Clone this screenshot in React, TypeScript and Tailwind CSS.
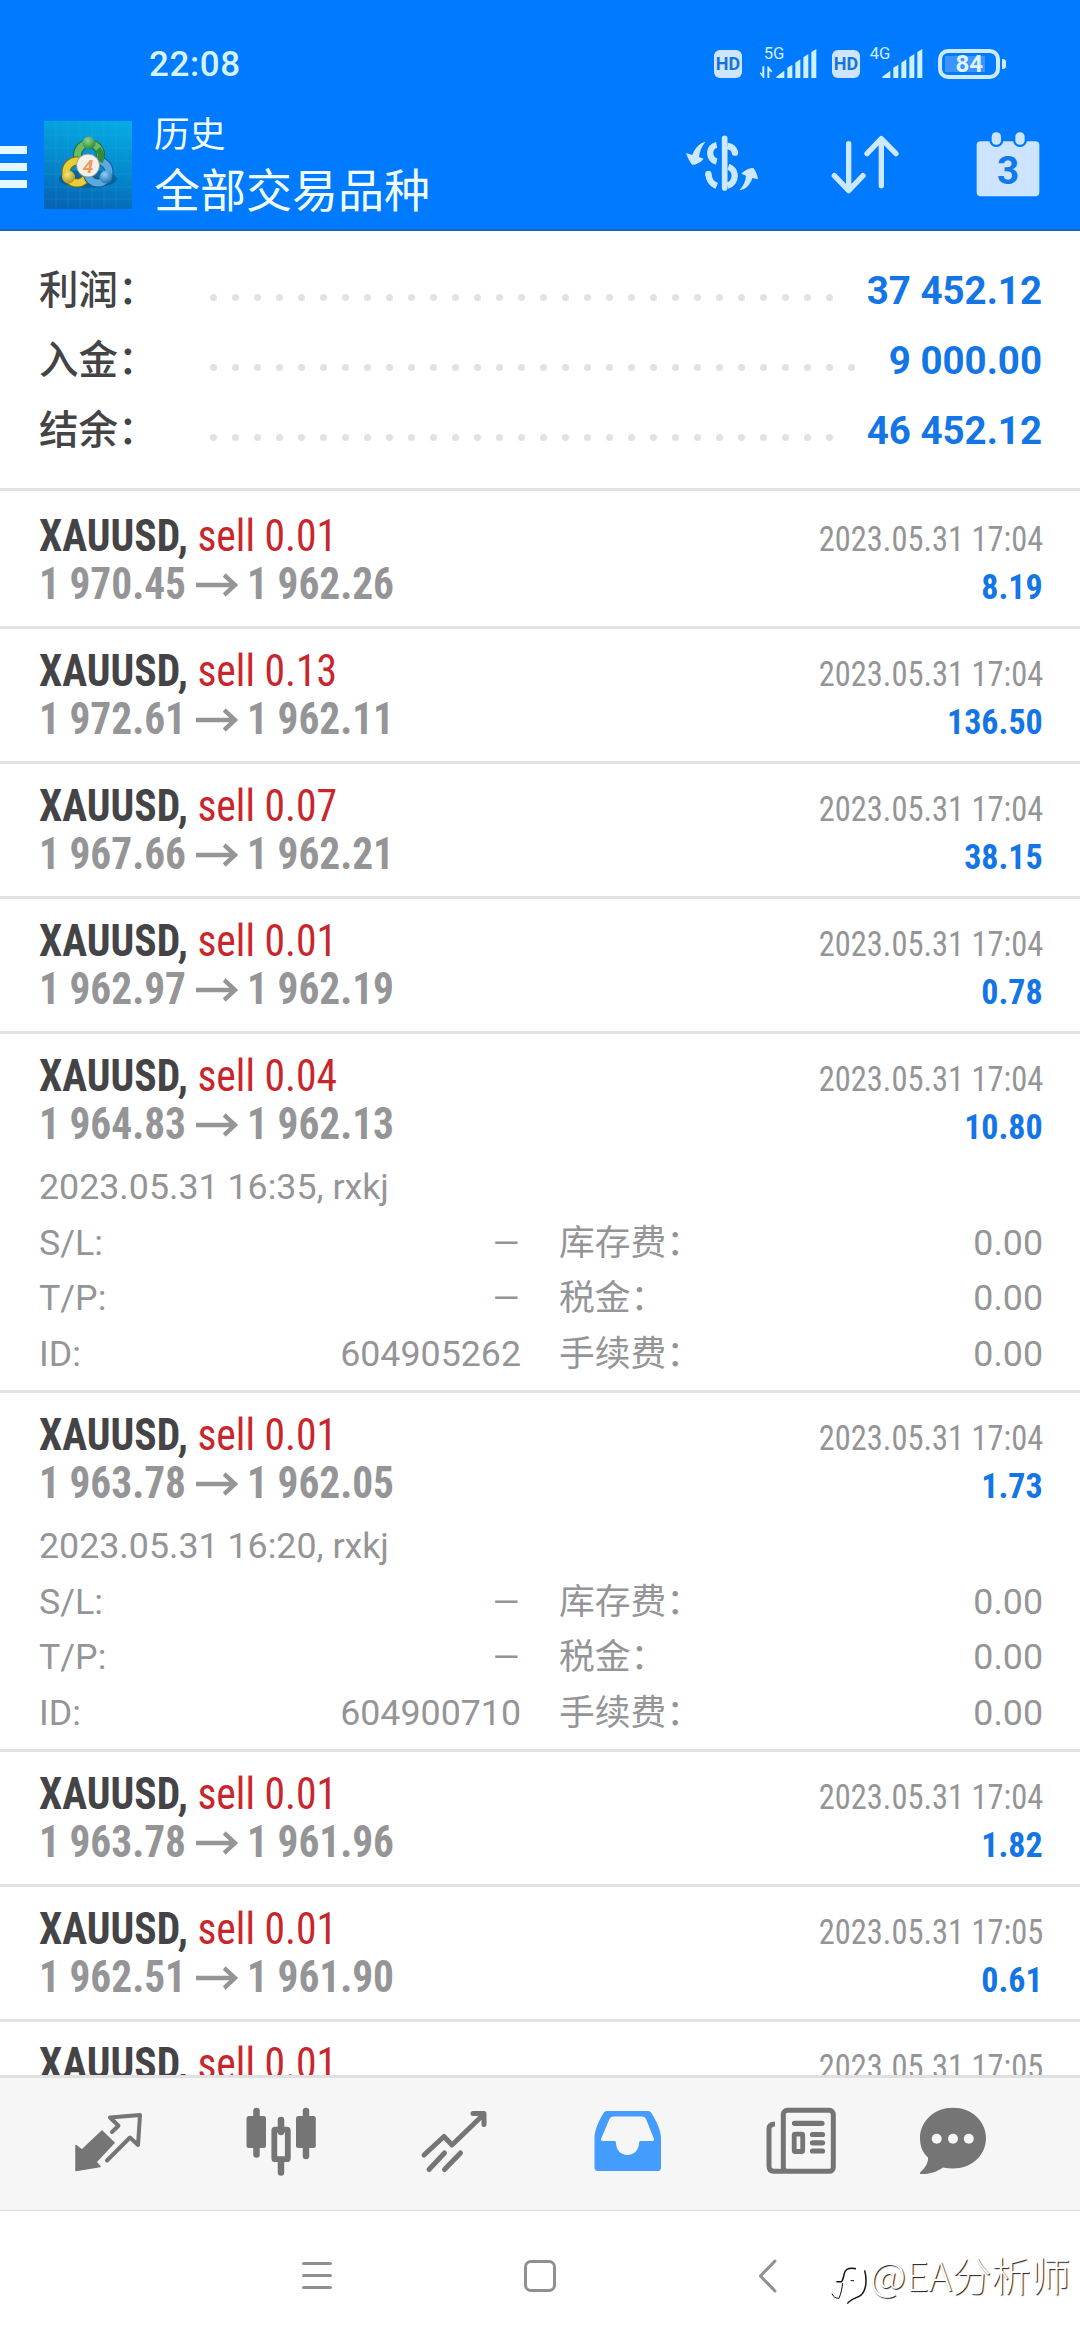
import type { ReactNode } from 'react';

type Trade = {
  volume: string;
  open: string;
  close: string;
  time: string;
  profit: string;
  details?: { opened: string; id: string };
};

const summary = [
  { label: '利润：', value: '37 452.12', dots: 29 },
  { label: '入金：', value: '9 000.00', dots: 30 },
  { label: '结余：', value: '46 452.12', dots: 29 },
];

const trades: Trade[] = [
  { volume: '0.01', open: '1 970.45', close: '1 962.26', time: '2023.05.31 17:04', profit: '8.19' },
  { volume: '0.13', open: '1 972.61', close: '1 962.11', time: '2023.05.31 17:04', profit: '136.50' },
  { volume: '0.07', open: '1 967.66', close: '1 962.21', time: '2023.05.31 17:04', profit: '38.15' },
  { volume: '0.01', open: '1 962.97', close: '1 962.19', time: '2023.05.31 17:04', profit: '0.78' },
  {
    volume: '0.04', open: '1 964.83', close: '1 962.13', time: '2023.05.31 17:04', profit: '10.80',
    details: { opened: '2023.05.31 16:35, rxkj', id: '604905262' },
  },
  {
    volume: '0.01', open: '1 963.78', close: '1 962.05', time: '2023.05.31 17:04', profit: '1.73',
    details: { opened: '2023.05.31 16:20, rxkj', id: '604900710' },
  },
  { volume: '0.01', open: '1 963.78', close: '1 961.96', time: '2023.05.31 17:04', profit: '1.82' },
  { volume: '0.01', open: '1 962.51', close: '1 961.90', time: '2023.05.31 17:05', profit: '0.61' },
];

function HdBadge() {
  return (
    <div className="mt-[50px] flex h-7 w-7 items-center justify-center rounded-[6px] bg-[#cfe5ff] [font-family:Roboto] text-[18px] leading-7 font-bold text-[#1674d8]">
      HD
    </div>
  );
}

function Signal({ label, data }: { label: string; data?: boolean }) {
  return (
    <svg className="mt-[46px] h-[34px] w-[58px] overflow-visible" viewBox="236 18 174 102" fill="#cdf0ff">
      <text x="250" y="57" fontSize="50" fontFamily="Roboto" fontWeight="400">{label}</text>
      {data && (
        <path d="M246 79h6v35h-3L238 100l3-3 5 4zM261 114h6V92l6 5 3-3-12-15h-3z" />
      )}
      <path d="M288 114v-4l24-18v22zM321 114V83l15-9v40zM345 114V68l15-10v56zM369 114V52l15-10v72zM393 114V36l15-9v87z" />
    </svg>
  );
}

function Battery() {
  return (
    <div className="mt-[49px] flex items-center">
      <div className="flex h-[30px] w-[62px] items-center rounded-[10px] border-4 border-[#cdeaff] px-[3px]">
        <div className="flex h-4 w-10 items-center justify-end bg-[#3c95ff]">
          <span className="mr-[2px] [font-family:Roboto] text-[24px] leading-4 font-bold text-[#dff4ff]">84</span>
        </div>
      </div>
      <div className="ml-[2px] h-[10px] w-1 rounded-r-[3px] bg-[#cdeaff]" />
    </div>
  );
}

function AppLogo() {
  return (
    <svg className="h-[88px] w-[88px]" viewBox="0 0 88 88">
      <defs>
        <linearGradient id="bg" x1="0.6" y1="0" x2="0.4" y2="1">
          <stop offset="0" stopColor="#06a9e2" />
          <stop offset="0.55" stopColor="#0587cb" />
          <stop offset="1" stopColor="#0664b4" />
        </linearGradient>
        <radialGradient id="green" cx="0.4" cy="0.3" r="0.8">
          <stop offset="0" stopColor="#8fd68c" /><stop offset="1" stopColor="#1f7a37" />
        </radialGradient>
        <radialGradient id="gold" cx="0.4" cy="0.3" r="0.8">
          <stop offset="0" stopColor="#f9ea7b" /><stop offset="1" stopColor="#a88a12" />
        </radialGradient>
        <radialGradient id="sky" cx="0.4" cy="0.3" r="0.8">
          <stop offset="0" stopColor="#8fd0f5" /><stop offset="1" stopColor="#1565a8" />
        </radialGradient>
      </defs>
      <rect width="88" height="88" fill="url(#bg)" />
      <path d="M12 0v88M24 0v88M36 0v88M48 0v88M60 0v88M72 0v88M0 14h88M0 27h88M0 40h88M0 53h88M0 66h88M0 78h88" stroke="#3fbdf0" strokeOpacity="0.16" strokeWidth="1" />
      <ellipse cx="44" cy="58" rx="29" ry="9" fill="#04304f" opacity="0.35" />
      <g fill="none">
        <circle cx="45" cy="34" r="11.500" stroke="#1d6b33" strokeWidth="9" />
        <circle cx="45" cy="34" r="11.500" stroke="#6cbb63" strokeWidth="7" />
        <circle cx="33" cy="51" r="11" stroke="#7d6b10" strokeWidth="9" />
        <circle cx="33" cy="51" r="11" stroke="#e6cf3a" strokeWidth="7" />
        <circle cx="54" cy="51" r="11" stroke="#155a94" strokeWidth="9" />
        <circle cx="54" cy="51" r="11" stroke="#5aa9e0" strokeWidth="7" />
        <path d="M54 28a12 12 0 0 1 2 13" stroke="#2f8b3e" strokeWidth="6" />
      </g>
      <circle cx="45" cy="22" r="6.500" fill="url(#green)" />
      <circle cx="24.500" cy="56" r="6.500" fill="url(#gold)" />
      <circle cx="62" cy="56" r="6.500" fill="url(#sky)" />
      <circle cx="44" cy="44.500" r="11.500" fill="#f3efe9" stroke="#8a8a78" strokeWidth="0.800" />
      <text x="44" y="51.500" textAnchor="middle" fontFamily="Roboto" fontWeight="700" fontSize="19" fontStyle="italic" fill="#ee9a58">4</text>
    </svg>
  );
}

function CurrencyIcon() {
  return (
    <svg className="mt-[134px] h-[58px] w-[76px]" viewBox="12 282 228 174" fill="none" stroke="#cde9ff" strokeWidth="19">
      <path d="M134 295V444" strokeWidth="17" strokeLinecap="round" />
      <path d="M110 315C84 320 84 358 110 365M145 380C170 388 172 428 142 437" />
      <path d="M142 318C155 320 163 328 165 338M85 402C87 424 96 432 110 438" strokeLinecap="butt" />
      <circle cx="165" cy="338" r="9.500" fill="#cde9ff" stroke="none" />
      <circle cx="85" cy="402" r="9.500" fill="#cde9ff" stroke="none" />
      <path d="M76 306C60 309 46 322 37 345L18 339C22 352 30 366 36 374C50 375 64 365 71 356L57 351C59 334 66 318 76 306ZM178 451C190 438 197 424 198 407L184 401C194 390 208 384 220 384C228 394 232 404 234 418L217 414C212 432 198 449 178 451Z" fill="#cde9ff" stroke="none" />
    </svg>
  );
}

function SortIcon() {
  return (
    <svg className="mt-[134px] h-[61px] w-[68px]" viewBox="453 282 204 183" fill="none" stroke="#cde9ff" strokeWidth="16" strokeLinecap="round" strokeLinejoin="round">
      <path d="M506 311V450M463 407L506 452L549 407M604 437V297M561 341L604 296L648 341" />
    </svg>
  );
}

function CalendarIcon() {
  return (
    <svg className="mt-[131px] h-[66px] w-[64px]" viewBox="1008 393 192 198">
      <rect x="1010" y="424" width="188" height="165" rx="12" fill="#cde4ff" />
      <rect x="1055" y="397" width="28" height="37" rx="13" fill="#cde4ff" stroke="#007aff" strokeWidth="14" paintOrder="stroke" />
      <rect x="1126" y="397" width="28" height="37" rx="13" fill="#cde4ff" stroke="#007aff" strokeWidth="14" paintOrder="stroke" />
      <text x="1104" y="553" textAnchor="middle" fontFamily="Roboto" fontWeight="700" fontSize="116" fill="#1279ea">3</text>
    </svg>
  );
}

function Header() {
  return (
    <header className="flex h-[231px] shrink-0 flex-col border-b-2 border-[#1468b8] bg-[#007aff]">
      <div className="flex h-0 items-start">
        <span className="mt-[45px] ml-[149px] w-[100px] [font-family:Roboto] text-[35px] leading-10 font-medium tracking-[0.6px] text-[#d4f3ff]">22:08</span>
        <div className="ml-[465px]"><HdBadge /></div>
        <div className="ml-[17px]"><Signal label="5G" data /></div>
        <div className="ml-[15px]"><HdBadge /></div>
        <div className="ml-[5px]"><Signal label="4G" /></div>
        <div className="ml-[15px]"><Battery /></div>
      </div>
      <div className="flex items-start">
        <div className="mt-[146px] flex w-[27px] flex-col gap-[9px]">
          <div className="h-2 bg-[#e4f8ff]" />
          <div className="h-2 bg-[#e4f8ff]" />
          <div className="h-2 bg-[#e4f8ff]" />
        </div>
        <div className="mt-[121px] ml-[17px]"><AppLogo /></div>
        <div className="mt-[113px] ml-[22px] w-[530px] text-[#f0fdff]">
          <div className="text-[35.75px] leading-[44px]">历史</div>
          <div className="text-[46px] leading-[68px]">全部交易品种</div>
        </div>
        <CurrencyIcon />
        <div className="ml-[71px]"><SortIcon /></div>
        <div className="ml-[77px]"><CalendarIcon /></div>
      </div>
    </header>
  );
}

function Summary() {
  return (
    <section className="shrink-0 border-b-[3px] border-[#e3e3e3] pt-[25px] pr-[38px] pb-[22px] pl-[39px] text-[38.5px] leading-[70px]">
      {summary.map((s) => (
        <div key={s.label} className="flex h-[70px] items-center">
          <span className="w-[171px] text-[39.5px] font-medium text-[#444446]">{s.label}</span>
          <span className="mt-3 flex flex-1 gap-[15px]">
            {Array.from({ length: s.dots }, (_, i) => (
              <i key={i} className="h-[7px] w-[7px] shrink-0 rounded-full bg-[#e2e2e2]" />
            ))}
          </span>
          <span className="font-bold text-[#1475e6]">{s.value}</span>
        </div>
      ))}
    </section>
  );
}

function Dash() {
  return <span className="inline-block origin-right scale-x-[1.28]">–</span>;
}

function DetailRow({ a, av, b, tight }: { a: string; av: ReactNode; b: string; tight?: boolean }) {
  return (
    <div className={tight ? 'flex h-[55px]' : 'flex h-14'}>
      <span className="w-[240px]">{a}</span>
      <span className="w-[242px] text-right">{av}</span>
      <span className="ml-[38px] w-[240px]">{b}</span>
      <span className="flex-1 text-right">0.00</span>
    </div>
  );
}

function TradeHeading({ volume }: { volume: string }) {
  return (
    <div className="h-12 origin-left scale-x-[0.945] whitespace-pre">
      <span className="font-bold text-[#444446]">XAUUSD,</span>
      <span className="text-[#c8262c]"> sell {volume}</span>
    </div>
  );
}

function TradeTime({ time }: { time: string }) {
  return <div className="h-12 origin-right scale-x-[0.908] leading-[54px]">{time}</div>;
}

function TradeRow({ trade, first }: { trade: Trade; first?: boolean }) {
  const { details } = trade;
  return (
    <article className={`shrink-0 border-b-[3px] border-[#e3e3e3] pr-[37px] pl-[39px] text-[#959597] ${first ? 'pt-[21px]' : 'pt-[18px]'} ${details ? 'pb-2' : 'pb-[18px]'}`}>
      <div className="flex justify-between [font-family:'Roboto_Condensed',Roboto,sans-serif]">
        <div className="text-[44px] leading-[48px]">
          <TradeHeading volume={trade.volume} />
          <div className="flex h-12 origin-left scale-x-[0.94] items-center font-bold">
            {trade.open}
            <svg className="mt-[2px] mr-[9px] ml-[10px] h-6 w-[46px]" viewBox="0 0 46 24" fill="none" stroke="#959597" strokeWidth="4.500">
              <path d="M1 12H42M31 2L42.500 12L31 22" />
            </svg>
            {trade.close}
          </div>
        </div>
        <div className="flex flex-col items-end text-[35.75px]">
          <TradeTime time={trade.time} />
          <div className="h-12 origin-right scale-x-[0.95] leading-[54px] font-bold text-[#1475e6]">{trade.profit}</div>
        </div>
      </div>
      {details && (
        <div className="pt-[11px] text-[35.75px] leading-[56px]">
          <div className="h-14">{details.opened}</div>
          <DetailRow a="S/L:" av={<Dash />} b="库存费：" tight />
          <DetailRow a="T/P:" av={<Dash />} b="税金：" />
          <DetailRow a="ID:" av={details.id} b="手续费：" />
        </div>
      )}
    </article>
  );
}

function TabIcon({ children, box, className }: { children: ReactNode; box: string; className: string }) {
  return (
    <svg className={`h-[74px] shrink-0 ${className}`} viewBox={box} fill="none" strokeLinecap="round" strokeLinejoin="round">
      {children}
    </svg>
  );
}

function TabBar() {
  return (
    <nav className="flex h-[136px] shrink-0 items-start border-t-[3px] border-b border-t-[#e0e0e1] border-b-[#dcdcdc] bg-[#f6f6f6] pt-[26px]">
      <TabIcon box="72 104 72 74" className="ml-[72px] w-[72px]">
        <path d="M76 170.500V145.500L82 150L102 131L114 142.700L96 162L100 166.500Z" fill="#757575" stroke="#757575" strokeWidth="1.500" />
        <path d="M107 160.500L130 137.500L138 145L140 115L110 117.500L118.500 125.700L112 132" stroke="#757575" strokeWidth="4" />
      </TabIcon>
      <TabIcon box="243 104 76 74" className="ml-[99px] w-[76px]">
        <path d="M256.500 111V154.500M306 111V156M281 120V132M281 160V172.500" stroke="#757575" strokeWidth="6.500" />
        <rect x="246.500" y="116" width="19.500" height="32" rx="2.500" fill="#757575" />
        <rect x="296" y="116" width="19.800" height="32" rx="2.500" fill="#757575" />
        <rect x="274.300" y="129.700" width="13.500" height="29.500" rx="1" stroke="#757575" strokeWidth="5.800" />
      </TabIcon>
      <TabIcon box="418 104 72 74" className="ml-[99px] w-[72px]">
        <path d="M424 155L444 136.500L452 145L483 115M473 113.500H484V124.500M444.500 153L429 169.500M460.500 153L444.500 169.500" stroke="#757575" strokeWidth="5" />
      </TabIcon>
      <TabIcon box="591 104 73 74" className="ml-[101px] w-[73px]">
        <path fillRule="evenodd" d="M607 111H648C650 111 651 112 652 114C657 122 661 131 661 138V167.500Q661 171 657.500 171H598Q594.500 171 594.500 167.500V138C594.500 131 598 122 603 114C604 112 605 111 607 111ZM613 116.500Q610.500 116.500 609.500 119L601 139Q600.500 141 602.500 141H614.500Q616 141 616 143C616 150 621 155 627.500 155S639 150 639 143Q639 141 640.500 141H652.500Q654.500 141 654 139L646 119Q645 116.500 642.500 116.500Z" fill="#449cff" />
      </TabIcon>
      <TabIcon box="763 104 75 74" className="ml-[99px] w-[75px]">
        <rect x="783.300" y="110.300" width="50" height="61" rx="4" stroke="#757575" strokeWidth="5" />
        <path d="M775 124C771 124 769 126 769 129V166Q769 171.300 774 171.300H785" stroke="#757575" strokeWidth="5" strokeLinecap="butt" />
        <path d="M794.500 123.300H822M812.500 134.500H822.500M812.500 142.800H822.500M812.500 151H822.500" stroke="#757575" strokeWidth="5.200" />
        <rect x="794.200" y="134.200" width="8.500" height="17.300" rx="1" stroke="#757575" strokeWidth="4.800" />
      </TabIcon>
      <TabIcon box="917 104 72 74" className="ml-[79px] w-[72px]">
        <path d="M953 107.700C971.500 107.700 986 121 986 138C986 155.500 971.500 168.500 953 168.500Q948 168.500 943 167.500C938 171.500 929 174.500 920.500 174Q919 173.500 920.500 172C925 168 928.500 163 928 157.500C922.500 152.500 920 146 920 138C920 121 934.500 107.700 953 107.700Z" fill="#757575" />
        <g fill="#f6f6f6">
          <circle cx="936.700" cy="138.700" r="5" />
          <circle cx="953" cy="138.700" r="5" />
          <circle cx="968.800" cy="138.700" r="5" />
        </g>
      </TabIcon>
    </nav>
  );
}

function SystemNav() {
  return (
    <footer className="flex h-[129px] shrink-0 items-center bg-white">
      <div className="ml-[302px] flex w-[30px] flex-col gap-[9px]">
        <div className="h-[3px] rounded-full bg-[#909090]" />
        <div className="h-[3px] rounded-full bg-[#909090]" />
        <div className="h-[3px] rounded-full bg-[#909090]" />
      </div>
      <div className="ml-[192px] h-8 w-8 rounded-[7px] border-[3px] border-[#909090]" />
      <svg className="ml-[202px] h-[34px] w-[19px]" viewBox="0 0 19 34" fill="none" stroke="#909090" strokeWidth="3" strokeLinecap="round" strokeLinejoin="round">
        <path d="M17 2L2.500 17L17 32" />
      </svg>
      <svg className="mt-5 ml-[53px] h-[38px] w-[40px]" viewBox="30 78 120 114" fill="none" stroke="#111" strokeWidth="4.500">
        <path d="M134 88C142 120 138 150 122 163C108 172 92 174 82 188" />
        <path d="M108 83C90 80 76 84 73 97C71 108 70 112 66 121M49 122H66" />
        <path d="M68 126C66 142 63 158 57 172M92 119H102M36 158C40 168 47 172 57 172" strokeWidth="3" />
      </svg>
      <span className="mb-[3px] [font-family:'Noto_Sans_CJK_SC',sans-serif] text-[39.5px] leading-[56px] font-light whitespace-nowrap text-white [text-shadow:1px_1px_1px_rgba(0,0,0,0.9)]">@EA分析师</span>
    </footer>
  );
}

export default function App() {
  return (
    <div className="flex h-[2340px] w-[1080px] flex-col overflow-hidden bg-white [font-family:Roboto,'Noto_Sans_CJK_SC',sans-serif]" lang="zh-CN">
      <Header />
      <main className="flex h-[1844px] shrink-0 flex-col overflow-hidden bg-white">
        <Summary />
        {trades.map((t, i) => (
          <TradeRow key={i} trade={t} first={i === 0} />
        ))}
        <article className="flex shrink-0 justify-between pt-[18px] pr-[37px] pl-[39px] text-[#959597] [font-family:'Roboto_Condensed',Roboto,sans-serif]">
          <div className="text-[44px] leading-[48px]"><TradeHeading volume="0.01" /></div>
          <div className="text-[35.75px]"><TradeTime time="2023.05.31 17:05" /></div>
        </article>
      </main>
      <TabBar />
      <SystemNav />
    </div>
  );
}
